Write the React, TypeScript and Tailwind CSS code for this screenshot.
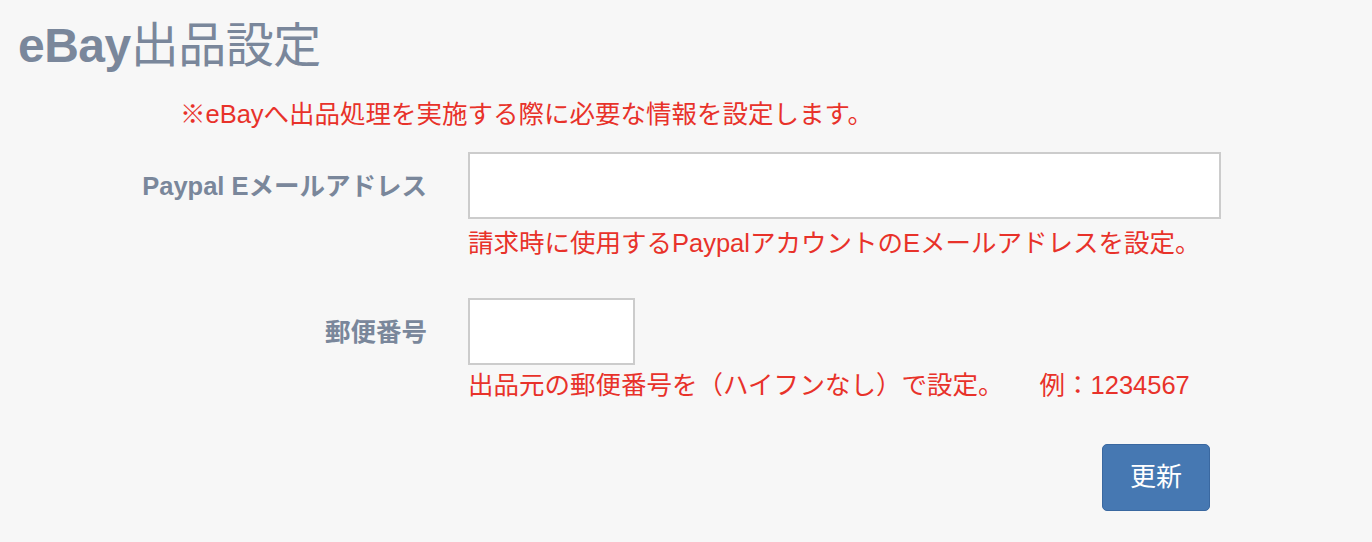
import React from 'react';

const font = { fontFamily: '"Liberation Sans", "Noto Sans CJK JP", sans-serif' };

const App: React.FC = () => {
  return (
    <div className="min-h-[542px] w-full bg-[#f7f7f7]" style={font}>
      <h1 className="pl-[18px] pt-[18px] text-[48px] leading-[56px] font-bold text-[#7a879b] tracking-[-0.5px]">
        eBay<span className="font-normal">出品設定</span>
      </h1>

      <p className="mt-[25px] pl-[180px] text-[25.5px] leading-[30px] text-[#e8322a]">
        ※eBayへ出品処理を実施する際に必要な情報を設定します。
      </p>

      <div className="mt-[23px] flex flex-col">
        {/* Paypal email */}
        <div className="flex">
          <label className="w-[427px] shrink-0 pt-[19px] text-right text-[25.5px] leading-[30px] font-bold text-[#7a879b]">
            Paypal Eメールアドレス
          </label>
          <div className="ml-[41px] flex flex-col">
            <input
              type="text"
              className="h-[67px] w-[753px] border-2 border-[#cccccc] bg-white outline-none"
            />
            <p className="mt-[6px] text-[25.5px] leading-[36px] text-[#e8322a]">
              請求時に使用するPaypalアカウントのEメールアドレスを設定。
            </p>
          </div>
        </div>

        {/* 郵便番号 */}
        <div className="mt-[37px] flex">
          <label className="w-[427px] shrink-0 pt-[19px] text-right text-[25.5px] leading-[30px] font-bold text-[#7a879b]">
            郵便番号
          </label>
          <div className="ml-[41px] flex flex-col">
            <input
              type="text"
              className="h-[67px] w-[167px] border-2 border-[#cccccc] bg-white outline-none"
            />
            <p className="mt-[2px] flex text-[25.5px] leading-[36px] text-[#e8322a] whitespace-nowrap">
              <span>出品元の郵便番号を（ハイフンなし）で設定。</span>
              <span className="ml-[36px]">例：1234567</span>
            </p>
          </div>
        </div>

        <div className="mt-[41px] flex">
          <div className="w-[1102px] shrink-0" />
          <button className="h-[67px] w-[108px] rounded-[5px] border border-[#3a68a0] bg-[#4678b2] text-[26px] text-white">
            更新
          </button>
        </div>
      </div>
    </div>
  );
};

export default App;
